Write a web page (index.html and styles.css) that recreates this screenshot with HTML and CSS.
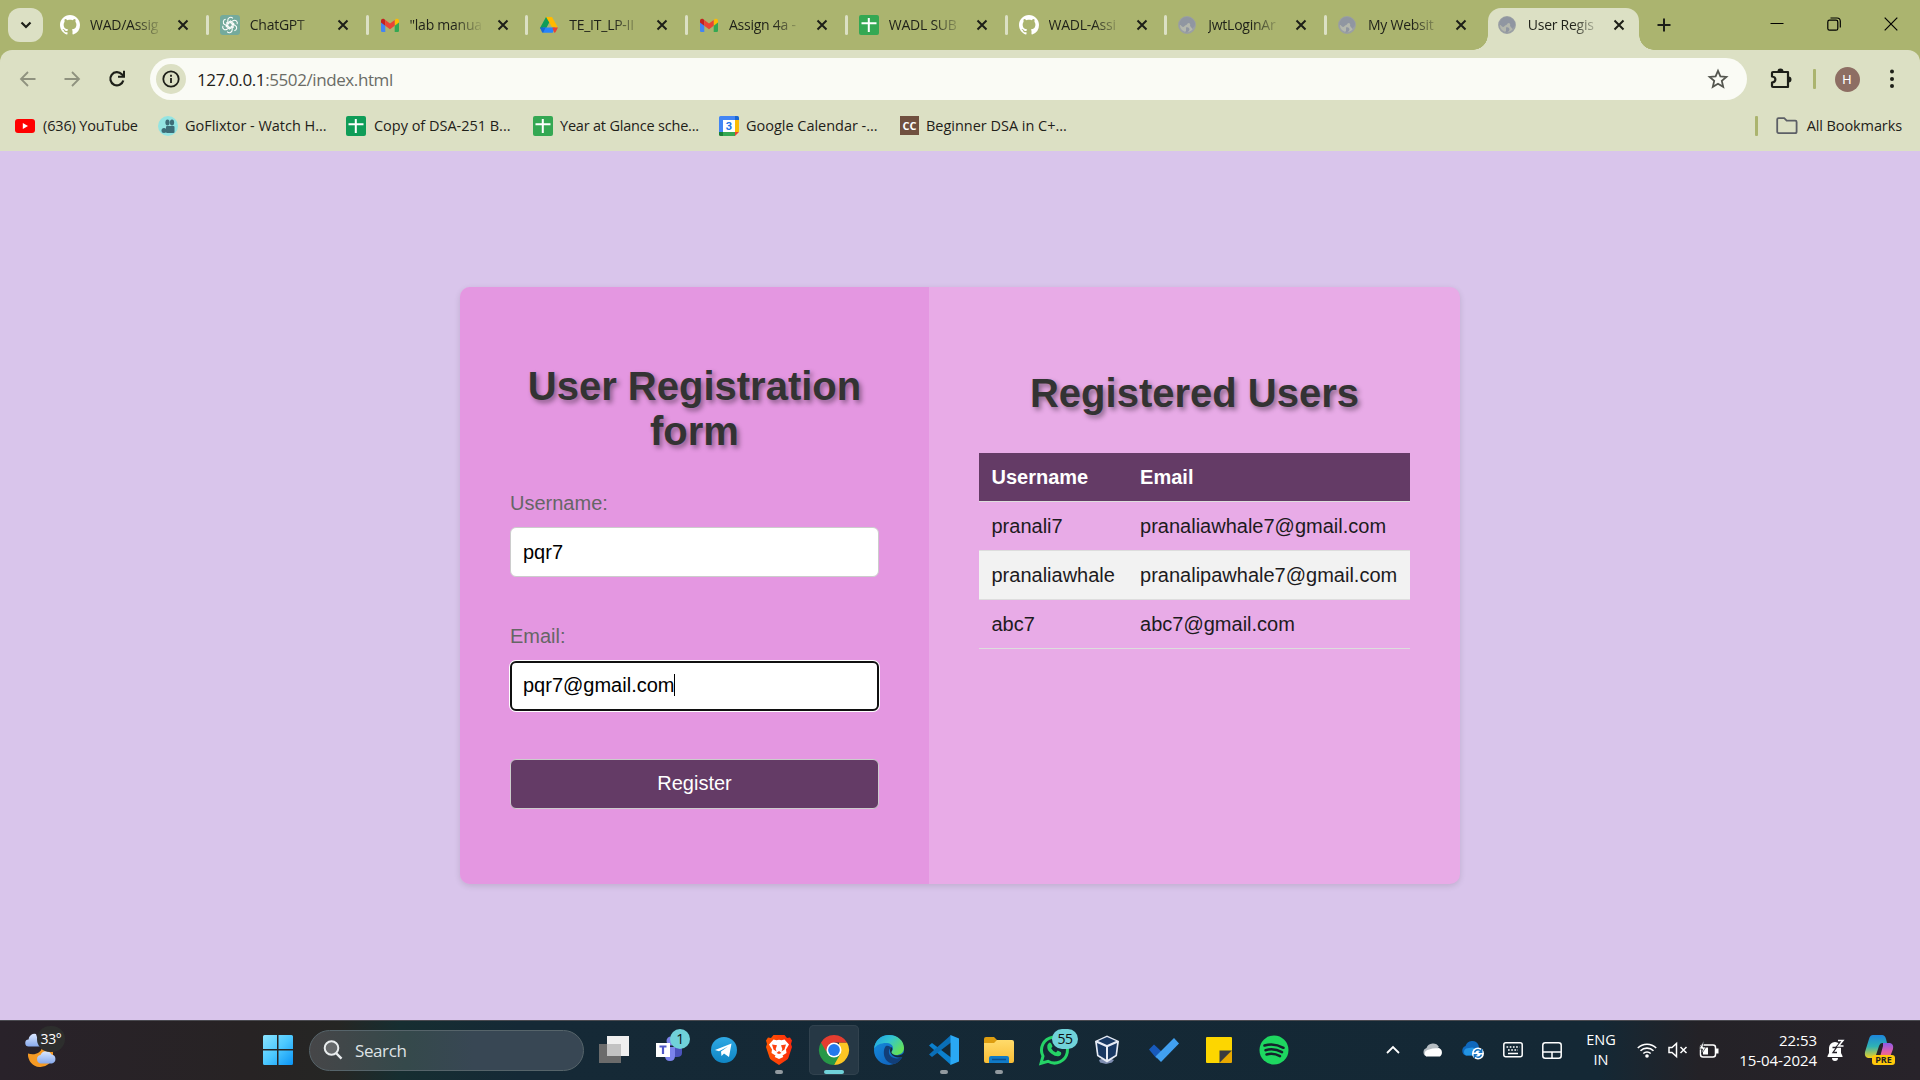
FILE: index.html
```html
<!DOCTYPE html>
<html lang="en">
<head>
<meta charset="utf-8">
<title>User Registration</title>
<link rel="stylesheet" href="styles.css">
</head>
<body>
<svg class="defs" width="0" height="0">
  <defs>
    <linearGradient id="gWin" x1="0" y1="0" x2="1" y2="1"><stop offset="0" stop-color="#8be4ff"/><stop offset=".5" stop-color="#4cc8ff"/><stop offset="1" stop-color="#0a94f5"/></linearGradient>
    <linearGradient id="gTel" x1="0" y1="0" x2="0" y2="1"><stop offset="0" stop-color="#2fa9e4"/><stop offset="1" stop-color="#0f85c4"/></linearGradient>
    <linearGradient id="gBrave"><stop offset="0" stop-color="#ff5601"/><stop offset="1" stop-color="#fb2a0d"/></linearGradient>
    <linearGradient id="gEdgeA" x1="0" y1="0" x2="1" y2=".6"><stop offset="0" stop-color="#1d9de6"/><stop offset=".5" stop-color="#33c5d0"/><stop offset="1" stop-color="#63e15a"/></linearGradient>
    <linearGradient id="gEdgeB" x1="0" y1="0" x2="1" y2="1"><stop offset="0" stop-color="#1590e0"/><stop offset="1" stop-color="#1058b5"/></linearGradient>
    <linearGradient id="gFolder" x1="0" y1="0" x2="0" y2="1"><stop offset="0" stop-color="#ffdb6b"/><stop offset="1" stop-color="#f9bd35"/></linearGradient>
    <linearGradient id="gCloud" x1="0" y1="0" x2="0" y2="1"><stop offset="0" stop-color="#dbe8ff"/><stop offset="1" stop-color="#87a9ec"/></linearGradient>
    <linearGradient id="gCopA" x1="0" y1="0" x2="0" y2="1"><stop offset="0" stop-color="#1d86dc"/><stop offset=".5" stop-color="#2fb2b4"/><stop offset="1" stop-color="#f0d020"/></linearGradient>
    <linearGradient id="gCopB" x1="0" y1="0" x2="0" y2="1"><stop offset="0" stop-color="#8d5be8"/><stop offset=".5" stop-color="#e55fa8"/><stop offset="1" stop-color="#f8834a"/></linearGradient>
    <symbol id="close" viewBox="0 0 12 12"><path d="M1.5 1.5l9 9M10.5 1.5l-9 9" stroke="#1d1f18" stroke-width="2" fill="none"/></symbol>
    <symbol id="github" viewBox="0 0 16 16"><path fill="#fff" d="M8 0C3.58 0 0 3.58 0 8c0 3.54 2.29 6.53 5.47 7.59.4.07.55-.17.55-.38 0-.19-.01-.82-.01-1.49-2.01.37-2.53-.49-2.69-.94-.09-.23-.48-.94-.82-1.13-.28-.15-.68-.52-.01-.53.63-.01 1.08.58 1.23.82.72 1.21 1.87.87 2.33.66.07-.52.28-.87.51-1.07-1.78-.2-3.64-.89-3.64-3.95 0-.87.31-1.59.82-2.15-.08-.2-.36-1.02.08-2.12 0 0 .67-.21 2.2.82.64-.18 1.32-.27 2-.27s1.36.09 2 .27c1.53-1.04 2.2-.82 2.2-.82.44 1.1.16 1.92.08 2.12.51.56.82 1.27.82 2.15 0 3.07-1.87 3.75-3.65 3.95.29.25.54.73.54 1.48 0 1.07-.01 1.93-.01 2.2 0 .21.15.46.55.38A8.01 8.01 0 0 0 16 8c0-4.42-3.58-8-8-8z"/></symbol>
    <path id="petal" d="M7.8 8.6V5.2a2.8 2.8 0 0 1 5-1.8M8 8.7l3-1.8 3.2 1.9"/>
    <symbol id="gpt" viewBox="0 0 20 20"><rect width="20" height="20" rx="3" fill="#74aa9c"/><g fill="none" stroke="#fff" stroke-width="1.05" stroke-linejoin="round"><use href="#petal"/><use href="#petal" transform="rotate(60 10 10)"/><use href="#petal" transform="rotate(120 10 10)"/><use href="#petal" transform="rotate(180 10 10)"/><use href="#petal" transform="rotate(240 10 10)"/><use href="#petal" transform="rotate(300 10 10)"/></g></symbol>
    <symbol id="gmail" viewBox="0 0 20 20"><path fill="#4285f4" d="M1 6l4.3 3.2V17H2.2Q1 17 1 15.8z"/><path fill="#34a853" d="M19 6l-4.3 3.2V17h3.1q1.2 0 1.2-1.2z"/><path fill="#fbbc04" d="M14.7 5l1.2-.9C17.2 3 19 4 19 5.7v1.7l-4.3 3.3z"/><path fill="#c5221f" d="M5.3 5l-1.2-.9C2.8 3 1 4 1 5.7v1.7l4.3 3.3z"/><path fill="#ea4335" d="M5.3 5L10 8.5 14.7 5v5.7L10 14.2l-4.7-3.5z"/></symbol>
    <symbol id="drive" viewBox="0 0 20 20"><path fill="#0f9d58" d="M7 2h2.5l1.5 4-6 11.5L1 13z"/><path fill="#ffba00" d="M7 2h6l6 10.5h-5.7z"/><path fill="#2684fc" d="M4 12.5h12l-2.3 5.3H4z"/><path fill="#ea4335" d="M13.3 12.5H19l-2.4 4.5q-.5.8-1.4.8z"/><path fill="#1967d2" d="M1 12.5h5.7L4 17.8q-.9-.2-1.200-1z"/></symbol>
    <symbol id="sheet" viewBox="0 0 20 20"><rect width="20" height="20" rx="2" fill="currentColor"/><path d="M2.5 8.2h15M9.800 3v14" stroke="#fff" stroke-width="2"/></symbol>
    <symbol id="globe" viewBox="0 0 20 20"><circle cx="9" cy="10" r="8" fill="#b4b7ad" stroke="#9a9fa4" stroke-width="1.8"/><path fill="#9096a1" d="M8.500 2c5 0 8 3 8.500 6.500 0 2-1 4-2.500 5.500-1-2-2-1.500-2.500-3.500.5-1.500 0-2.500-1.500-2.500-1.500.5-1.200 1.800-2.500 2S6.500 12 5 12c-1.500-.5-2-2-3.500-2.200C1.500 5 5 2 8.500 2zM8 12.500c2-1 3.500.500 3.500 2 0 1.500-2 3-4 3.300-.500-1.300 1-2 .500-3.300z"/></symbol>
  </defs>
</svg>

<header class="tabstrip">
  <button class="tabsearch"><svg width="14" height="14" viewBox="0 0 14 14"><path d="M2.5 4.500L7 9l4.500-4.500" fill="none" stroke="#1d1f18" stroke-width="2.200"/></svg></button>
  <div class="tabs">
    <div class="tab first"><svg class="fav"><use href="#github"/></svg><span class="t">WAD/Assig</span><svg class="x"><use href="#close"/></svg></div>
    <div class="tab"><svg class="fav"><use href="#gpt"/></svg><span class="t">ChatGPT</span><svg class="x"><use href="#close"/></svg></div>
    <div class="tab"><svg class="fav"><use href="#gmail"/></svg><span class="t">"lab manua</span><svg class="x"><use href="#close"/></svg></div>
    <div class="tab"><svg class="fav"><use href="#drive"/></svg><span class="t">TE_IT_LP-II</span><svg class="x"><use href="#close"/></svg></div>
    <div class="tab"><svg class="fav"><use href="#gmail"/></svg><span class="t">Assign 4a -</span><svg class="x"><use href="#close"/></svg></div>
    <div class="tab"><svg class="fav sheet-a"><use href="#sheet"/></svg><span class="t">WADL SUB</span><svg class="x"><use href="#close"/></svg></div>
    <div class="tab"><svg class="fav"><use href="#github"/></svg><span class="t">WADL-Assi</span><svg class="x"><use href="#close"/></svg></div>
    <div class="tab"><svg class="fav"><use href="#globe"/></svg><span class="t">JwtLoginAr</span><svg class="x"><use href="#close"/></svg></div>
    <div class="tab"><svg class="fav"><use href="#globe"/></svg><span class="t">My Websit</span><svg class="x"><use href="#close"/></svg></div>
    <div class="tab active"><svg class="fav"><use href="#globe"/></svg><span class="t">User Regis</span><svg class="x"><use href="#close"/></svg></div>
  </div>
  <svg class="plus" width="14" height="14" viewBox="0 0 14 14"><path d="M7 .5v13M.5 7h13" stroke="#1d1f18" stroke-width="2"/></svg>
  <div class="winctl">
    <svg width="14" height="14" viewBox="0 0 14 14"><path d="M.5 6.500h13" stroke="#000" stroke-width="1"/></svg>
    <svg width="14" height="14" viewBox="0 0 14 14"><g fill="none" stroke="#000" stroke-width="1.200"><rect x=".8" y="3.200" width="10" height="10" rx="1.800"/><path d="M3.500 1h6.500q3.300 0 3.300 3.300v6.200"/></g></svg>
    <svg width="14" height="14" viewBox="0 0 14 14"><path d="M.7.700l12.600 12.600M13.300.700L.7 13.300" stroke="#000" stroke-width="1.200"/></svg>
  </div>
</header>

<section class="chrome">
  <div class="toolbar">
    <svg class="nav dim" width="18" height="18" viewBox="0 0 18 18"><path d="M16.500 9H2.500M9 2L2 9l7 7" fill="none" stroke="currentColor" stroke-width="1.800"/></svg>
    <svg class="nav dim" width="18" height="18" viewBox="0 0 18 18"><path d="M1.500 9h14M9 2l7 7-7 7" fill="none" stroke="currentColor" stroke-width="1.800"/></svg>
    <svg class="nav" width="18" height="18" viewBox="0 0 18 18"><path d="M15.300 10.500A6.600 6.600 0 1 1 13.800 4.300L16 6.500" fill="none" stroke="#1d1f18" stroke-width="2.200"/><path d="M17 .8v7h-7v-2h5v-5z" fill="#1d1f18"/></svg>
    <div class="omnibox">
      <span class="info"><svg width="18" height="18" viewBox="0 0 18 18"><circle cx="9" cy="9" r="7.700" fill="none" stroke="#1d1f18" stroke-width="1.800"/><path d="M9 8v5M9 4.800v1.900" stroke="#1d1f18" stroke-width="1.800"/></svg></span>
      <span class="url">127.0.0.1<i>:5502/index.html</i></span>
      <svg class="star" width="20" height="20" viewBox="0 0 20 20"><path d="M10 1.800l2.400 5.600 6 .5-4.600 4 1.400 5.900L10 14.700l-5.200 3.100 1.400-5.900-4.600-4 6-.5z" fill="none" stroke="#555750" stroke-width="1.800"/></svg>
    </div>
    <svg class="puzzle" width="22" height="22" viewBox="0 0 22 22"><path d="M3.500 4h14.500v15H3q-1 0-1-1v-3.500c4.500-.5 4.500-5.500 0-6V5q0-1 1-1z" fill="none" stroke="#1d1f18" stroke-width="2.200" stroke-linejoin="round"/><path d="M7.500 3.500a3 3 0 0 1 6 0zM18.500 8.500a3 3 0 0 1 0 6z" fill="#1d1f18"/></svg>
    <span class="bar b1"></span>
    <span class="avatar">H</span>
    <svg class="dots" width="6" height="20" viewBox="0 0 6 20"><g fill="#1d1f18"><circle cx="3" cy="2.500" r="2"/><circle cx="3" cy="10" r="2"/><circle cx="3" cy="17" r="2"/></g></svg>
  </div>
  <nav class="bookmarks">
    <a class="k1"><svg class="fav" viewBox="0 0 20 20"><rect y="3" width="20" height="14" rx="3" fill="#f00"/><path d="M7.800 7l5.200 3-5.200 3z" fill="#fff"/></svg><span>(636) YouTube</span></a>
    <a class="k2"><svg class="fav" viewBox="0 0 20 20"><circle cx="10" cy="10" r="10" fill="#93e4e2"/><g fill="#3d6d78"><ellipse cx="9.500" cy="6.500" rx="2.100" ry="3"/><ellipse cx="14" cy="6.500" rx="2.100" ry="3"/><rect x="8" y="10" width="8.500" height="7" rx="1"/><circle cx="6" cy="14.500" r="2.500"/></g></svg><span>GoFlixtor - Watch H...</span></a>
    <a class="k3"><svg class="fav sheet-b"><use href="#sheet"/></svg><span>Copy of DSA-251 B...</span></a>
    <a class="k4"><svg class="fav sheet-a"><use href="#sheet"/></svg><span>Year at Glance sche...</span></a>
    <a class="k5"><svg class="fav" viewBox="0 0 20 20"><path fill="#4285f4" d="M1.500 0H16v4H4v12H0V1.500Q0 0 1.500 0z"/><path fill="#1967d2" d="M16 0h2.500Q20 0 20 1.500V4h-4z"/><path fill="#fbbc04" d="M16 4h4v12h-4z"/><path fill="#34a853" d="M4 16h12v4H4z"/><path fill="#188038" d="M0 16h4v4H1.500Q0 20 0 18.500z"/><path fill="#ea4335" d="M16 16h4l-4 4z"/><path fill="#fff" d="M4 4h12v12H4z"/><text x="10" y="14.300" text-anchor="middle" class="cal">3</text></svg><span>Google Calendar -...</span></a>
    <a class="k6"><span class="cc">CC</span><span>Beginner DSA in C+...</span></a>
    <a class="all"><span class="bar"></span><svg width="22" height="18" viewBox="0 0 22 18"><path d="M1.200 14.500v-12Q1.200 1.200 2.500 1.200h5.700l2.500 2.500h8.600q1.300 0 1.300 1.300v9.500q0 1.700-1.500 1.700H2.700q-1.500 0-1.500-1.700z" fill="none" stroke="#5c5f66" stroke-width="1.800"/></svg><span>All Bookmarks</span></a>
  </nav>
</section>

<main class="page">
  <div class="card">
    <form class="register">
      <h1>User Registration form</h1>
      <label>Username:</label>
      <div class="field">pqr7</div>
      <label>Email:</label>
      <div class="field focus">pqr7@gmail.com<span class="caret"></span></div>
      <button type="button" class="submit">Register</button>
    </form>
    <section class="users">
      <h1>Registered Users</h1>
      <table>
        <tr><th>Username</th><th>Email</th></tr>
        <tr><td>pranali7</td><td>pranaliawhale7@gmail.com</td></tr>
        <tr class="alt"><td>pranaliawhale</td><td>pranalipawhale7@gmail.com</td></tr>
        <tr><td>abc7</td><td>abc7@gmail.com</td></tr>
      </table>
    </section>
  </div>
</main>

<footer class="taskbar">
  <div class="weather">
    <svg width="32" height="32" viewBox="0 0 32 32"><path d="M3 13.500a3.500 3.500 0 0 1-.5-7A6 6 0 0 1 10 1l4 12.500z" fill="url(#gCloud)"/><path d="M16 14.500h11v8a12.500 12.500 0 0 1-25-2c6 2 13 0 14-6z" fill="#f59a24"/><path d="M15 30.500a4.300 4.300 0 0 1-.5-8.500 6 6 0 0 1 11-.5 4.600 4.600 0 0 1 .5 9z" fill="url(#gCloud)"/></svg>
    <span class="temp">33°</span>
  </div>
  <svg class="start" width="30" height="30" viewBox="0 0 30 30"><path fill="url(#gWin)" d="M1.500 0H14v14H0V1.500Q0 0 1.500 0zM15.500 0h13Q30 0 30 1.500V14H15.500zM0 15.500h14V30H1.500Q0 30 0 28.500zM15.500 15.500H30v13q0 1.500-1.500 1.500h-13z"/></svg>
  <div class="search"><svg width="20" height="20" viewBox="0 0 20 20"><circle cx="8.500" cy="8" r="6.800" fill="#ffffff30" stroke="#e9edee" stroke-width="2"/><path d="M13 13l5.500 5.700" stroke="#e9edee" stroke-width="2.500"/></svg><span>Search</span></div>
  <div class="apps">
    <div class="app"><svg viewBox="0 0 30 30"><path fill="#6b6b6b" d="M0 9h22v19H0z"/><path fill="#efefef" d="M8 1h22v20H8z"/><path fill="#c2c2c2" d="M8 9h14v12H8z"/></svg></div>
    <div class="app"><svg viewBox="0 0 30 30"><path d="M18 12h10v6q0 4-5 4h-4z" fill="#4b53bc"/><circle cx="17" cy="6" r="4.500" fill="#7b83eb"/><path d="M11 12h10v9q0 5-5 5-5 0-5-5z" fill="#7b83eb"/><rect x="2" y="8" width="14" height="14" fill="#fff"/><path d="M5.500 11.500h7M9 11v8" stroke="#5059c9" stroke-width="2.200"/></svg><span class="badge">1</span></div>
    <div class="app"><svg viewBox="0 0 30 30"><circle cx="15" cy="15" r="13" fill="url(#gTel)"/><path d="M6 15L22.500 8.500 20 22l-5-3.500-2.500 2.500-.5-4.500 7-5-9 4.800z" fill="#fff"/></svg></div>
    <div class="app run"><svg viewBox="0 0 30 30"><path d="M9.500 0h11l2.500 3 3-.5 2 3-1 3.500 1 3-3.500 10.500q-.5 1.500-2 2.500L15 30l-7.500-5q-1.500-1-2-2.500L2 12l1-3-1-3.500 2-3L7 3z" fill="url(#gBrave)"/><path d="M9.500 4.500l3 .8 2.500-.5 2.500.5 3-.8 4.500 5-3 5 .5 3.500-4 2.500.8 1.500L15 24l-4.300-2 .8-1.500-4-2.500.5-3.500L5 9.500z" fill="#fff"/><path d="M8 9.500l5 .7-1.300 3.800.8 2.500-3-2zM22 9.500l-5 .7 1.300 3.800-.8 2.500 3-2zM15 16l2.500 2L15 19l-2.500-1z" fill="#fb4310"/></svg></div>
    <div class="app on"><svg viewBox="0 0 30 30"><path d="M28 7.500A15 15 0 0 1 15 30L20 16V7.500z" fill="#fdc623"/><path d="M2 7.500A15 15 0 0 0 15 30l6.500-11.200L9 12z" fill="#279847"/><path d="M2 7.500a15 15 0 0 1 26 0H15l-7 5.500-.5 4z" fill="#e43d30"/><circle cx="15" cy="15" r="7.500" fill="#fff"/><circle cx="15" cy="15" r="5.900" fill="#2379ec"/></svg></div>
    <div class="app"><svg viewBox="0 0 30 30"><circle cx="15" cy="15" r="15" fill="url(#gEdgeB)"/><path d="M0 14C1 5 7 0 15 0c9 0 15 6 15 13 0 5-4 7-8 7-3 0-5-1-5-2.500 0-1 2-1.500 2-4.500 0-3-3-5-7-5C7 8 2 10 0 14z" fill="url(#gEdgeA)"/><path d="M12 11c-4 4-3 17 8 18 4-1 7-4 8-7-5 3-12 1-13-4-.5-3 1-5 2-5 0-1-3-3-5-2z" fill="#123f79"/><path d="M17 12c2 1 1.500 3.500.3 5 .7 2 3 3.500 6 3.500 3 0 5.500-1 6.700-3v4c-4 2-11 1-13-3-1.500-2-1-4.500 0-6.500z" fill="#142936"/></svg></div>
    <div class="app run"><svg viewBox="0 0 30 30"><path d="M0 10.500L3 8l19 14.500V30z" fill="#0b80ce"/><path d="M0 19.500L3 22 22 7.500V0z" fill="#0a6fb8"/><path d="M21.500 0L30 3.500v23L21.500 30z" fill="#2aa8f4"/></svg></div>
    <div class="app run"><svg viewBox="0 0 30 30"><path d="M0 4q0-2 2-2h8l3 3v6H0z" fill="#dd9d10"/><path d="M0 8h10l3-3h15q2 0 2 2v19q0 2-2 2H2q-2 0-2-2z" fill="url(#gFolder)"/><path d="M5 28v-5q0-2 2-2h16q2 0 2 2v5z" fill="#107bc7"/><path d="M8 24.500h14" stroke="#0b4f8e" stroke-width="1.500"/></svg></div>
    <div class="app"><svg viewBox="0 0 30 30"><path d="M2 28.300l2-7.200A13 13 0 1 1 9 26.300z" fill="none" stroke="#25d366" stroke-width="3"/><path d="M9 9q2-3 3.500 0l1 2.500-1.300 1.800q1.500 3 4.800 4.300l1.700-2 3.300 1.700q1 3-2.500 4-3 .5-7-2.500T8.300 12.500Q8 10 9 9z" fill="#25d366"/></svg><span class="badge wide">55</span></div>
    <div class="app vbox"><svg viewBox="0 0 30 30"><path d="M7 25l7-3 8 3-2 2.500-6 1.500-6-1.500z" fill="#7e8db0"/><path d="M3 6l12-5.500L27 6l-2 15-10 6.500L5 21z" fill="#e6ebf5"/><path d="M6 6l9-4 9 4-9 4zM5 8l9 4v12.500L6.500 20zM25 8l-9 4v12.500l7.500-4.500z" fill="#183862"/></svg></div>
    <div class="app"><svg viewBox="0 0 30 30"><path d="M0 14.500l5-5 8.500 8-6 6z" fill="#185abd"/><path d="M6.500 21.500L25 3l5 5.500L12 27z" fill="#41a0f0"/></svg></div>
    <div class="app"><svg viewBox="0 0 30 30"><path d="M3 2h24q1 0 1 1v13L16 28H3q-1 0-1-1V3q0-1 1-1z" fill="#fdd600"/><path d="M15.500 15.500H28L15.500 28z" fill="#393a40"/><path d="M28 15.500V27q0 1-1 1H15.500z" fill="#e8a800"/></svg></div>
    <div class="app"><svg viewBox="0 0 30 30"><circle cx="15" cy="15" r="14.500" fill="#1ed760"/><path d="M5.500 10.500q9.500-3 19 2.300M6.500 15.200q8.500-2.500 16.500 2M7.500 19.500q7-2 13.500 1.700" fill="none" stroke="#14232c" stroke-width="2.500" stroke-linecap="round"/></svg></div>
  </div>
  <div class="tray">
    <svg width="14" height="10" viewBox="0 0 14 10"><path d="M1 8l6-6 6 6" fill="none" stroke="#fff" stroke-width="1.800"/></svg>
    <svg width="22" height="16" viewBox="0 0 22 16"><path d="M4.500 14.500a4.500 4.500 0 0 1 0-8.500A7 7 0 0 1 17 5z" fill="#b6bdc2"/><path d="M4.500 14.500a3.500 3.500 0 0 1 1-6.500l5-1.500L17 6a5 5 0 0 1 1 8.500z" fill="#fff"/></svg>
    <svg width="24" height="20" viewBox="0 0 24 20"><path d="M5 15.500a5 5 0 0 1-.5-9.500A7 7 0 0 1 17.500 5L19 15z" fill="#0f68bd"/><path d="M5 15.500a4 4 0 0 1 0-7l6-1 9 2-3 6z" fill="#2394e3"/><circle cx="17" cy="13.500" r="6" fill="#fff"/><path d="M13.500 12.500a3.700 3.700 0 0 1 7-.5M20.500 14.500a3.700 3.700 0 0 1-7 .5M20.700 9v3.200h-3M13.300 18v-3.200h3" stroke="#1673c3" stroke-width="1.400" fill="none"/></svg>
    <svg width="20" height="16" viewBox="0 0 20 16"><rect x=".8" y=".8" width="18.400" height="14" rx="2" fill="none" stroke="#fff" stroke-width="1.500"/><path d="M3.500 5h13M5 8h10" stroke="#fff" stroke-width="1.700" stroke-dasharray="1.700 1.500"/><path d="M5 11.500h10" stroke="#fff" stroke-width="1.500"/></svg>
    <svg width="20" height="17" viewBox="0 0 20 17"><rect x=".8" y=".8" width="18.400" height="15.400" rx="2.500" fill="none" stroke="#fff" stroke-width="1.500"/><path d="M1 10h18M10 10v6" stroke="#fff" stroke-width="1.500"/></svg>
    <span class="lang">ENG<br>IN</span>
    <svg width="20" height="16" viewBox="0 0 20 16"><g fill="none" stroke="#fff" stroke-width="1.600"><path d="M.8 6a13 13 0 0 1 18.400 0M3.500 8.800a9.200 9.200 0 0 1 13 0M6.300 11.500a5.300 5.300 0 0 1 7.400 0"/></g><circle cx="10" cy="14" r="1.800" fill="#fff"/></svg>
    <svg width="20" height="16" viewBox="0 0 20 16"><path d="M1 5.500h3L8.500 1.500v13L4 10.500H1zM12.500 5l6 6M18.500 5l-6 6" fill="none" stroke="#fff" stroke-width="1.500"/></svg>
    <svg width="20" height="18" viewBox="0 0 20 18"><rect x="1.500" y="4" width="15" height="12" rx="2.500" fill="none" stroke="#fff" stroke-width="1.500"/><path d="M17 7.500h2.500v5H17zM4 6.500h5v7H4z" fill="#fff"/><path d="M5-.5L0 8h3.500L2.500 13 7 6H4z" fill="#fff" stroke="#202228" stroke-width=".7"/></svg>
    <span class="clock">22:53<br>15-04-2024</span>
    <svg width="18" height="22" viewBox="0 0 18 22"><path d="M8 3a6 6 0 0 0-6 6v5L.5 17v1H15.500v-1L14 14V9a6 6 0 0 0-6-6zM5 19h6a3 3 0 0 1-6 0z" fill="#fff"/><path d="M5.500 8.500h4L6 13.500h4" fill="none" stroke="#25222a" stroke-width="1.300"/><path d="M11 1.500h5l-4.500 5.500h5" fill="none" stroke="#25222a" stroke-width="3.500"/><path d="M11 1.500h5l-4.500 5.500h5" fill="none" stroke="#fff" stroke-width="1.500"/></svg>
    <div class="copilot"><svg width="30" height="30" viewBox="0 0 30 30"><path d="M8 0h9q3 0 4 4l1 4h-5q-2 0-3 3l-3 9q-1 3-4 3H3q-4-1-3-6L4 4q1-4 4-4z" fill="url(#gCopA)"/><path d="M18 8h7q4 1 3 6l-3 8q-2 4-5 4h-9q3-1 4-4l3-11q0-2 0-3z" fill="url(#gCopB)"/></svg><span class="pre">PRE</span></div>
  </div>
</footer>
</body>
</html>
```
FILE: styles.css
```css
* { box-sizing: border-box; }
body {
  margin: 0;
  width: 1920px;
  height: 1080px;
  overflow: hidden;
  display: flex;
  flex-direction: column;
  background: #d9c5eb;
  font-family: "Open Sans", "Noto Sans", sans-serif;
  color: #1f2119;
}
svg { display: block; flex: none; overflow: visible; }
.defs { position: absolute; }
button { border: 0; padding: 0; }

/* Tab strip */
.tabstrip { height: 50px; background: #abb46f; display: flex; align-items: center; padding-left: 8px; flex: none; box-shadow: 0 12px 0 #abb46f; position: relative; }
.tabsearch { width: 35px; height: 34px; border-radius: 12px; background: #dce0c4; display: grid; place-items: center; margin-right: 4px; }
.tabs { display: flex; height: 50px; }
.tab { width: 159.75px; display: flex; align-items: center; padding-left: 13px; position: relative; }
.tab::before { content: ""; position: absolute; left: -1px; top: 15px; width: 3px; height: 20px; border-radius: 2px; background: #dce0c4; }
.tab.first::before { display: none; }
.fav { width: 20px; height: 20px; }
.sheet-a { color: #34a853; }
.sheet-b { color: #0f9d58; }
.t {
  width: 74px; margin-left: 10px; font-size: 14px; letter-spacing: -.25px; line-height: 22px; white-space: nowrap;
  -webkit-mask-image: linear-gradient(90deg, #000 60%, transparent 100%);
  mask-image: linear-gradient(90deg, #000 60%, transparent 100%);
}
.x { width: 12px; height: 12px; margin-left: 13px; }
.tab.active { width: 151px; height: 42px; margin: 8px 0 0 3px; padding: 0 0 8px 10px; background: #dce0c4; border-radius: 13px 13px 0 0; }
.tab.active .x { margin-left: 11px; }
.tab.active::before, .tab.active::after {
  content: ""; position: absolute; left: -15px; top: auto; bottom: 0; width: 15px; height: 15px; border-radius: 0;
  background: radial-gradient(circle at 0 0, transparent 14.5px, #dce0c4 15px);
}
.tab.active::after { left: auto; right: -15px; background: radial-gradient(circle at 100% 0, transparent 14.5px, #dce0c4 15px); }
.plus { margin-left: 18px; }
.winctl { margin-left: auto; display: flex; gap: 43px; padding: 0 22px 2px 0; }

/* Toolbar and bookmarks */
.chrome { height: 101px; flex: none; background: #dce0c4; border-radius: 12px 12px 0 0; padding-top: 8px; position: relative; }
.toolbar { height: 42px; display: flex; align-items: center; padding-left: 18.5px; }
.nav { margin-right: 26.5px; }
.dim { color: #8f927f; }
.omnibox { width: 1597px; height: 42px; border-radius: 21px; background: #fafbf5; display: flex; align-items: center; padding: 0 19px 0 6px; margin-left: -2px; }
.info { width: 30px; height: 30px; border-radius: 50%; background: #dce0c4; display: grid; place-items: center; }
.url { font-size: 17px; letter-spacing: -.4px; margin-left: 11px; }
.url i { font-style: normal; color: #6a6c66; }
.star { margin-left: auto; }
.puzzle { margin-left: 23px; }
.bar { width: 2.5px; height: 20px; border-radius: 1px; background: #abb46f; }
.b1 { margin-left: 21px; }
.avatar { width: 25px; height: 25px; border-radius: 50%; background: #8d6e63; color: #fff; font: 13px Roboto, sans-serif; display: grid; place-items: center; margin-left: 19px; }
.dots { margin-left: 29px; }
.bookmarks { height: 51px; display: flex; align-items: center; padding-left: 15px; font-size: 14.5px; letter-spacing: -.02px; }
.bookmarks a { display: flex; align-items: center; gap: 8px; white-space: nowrap; }
.bookmarks .k2, .bookmarks .k4, .bookmarks .k5 { gap: 7px; }
.k1 { width: 143px; letter-spacing: -.15px; }
.k2 { width: 188px; }
.k3 { width: 187px; }
.k4 { width: 186px; letter-spacing: -.2px; }
.k5 { width: 181px; }
.bookmarks .k6 { gap: 7px; }
.cal { font: bold 11px Roboto, sans-serif; fill: #1a73e8; }
.cc { width: 19px; height: 19px; background: #70503f; color: #fff; font: bold 11px/19px "Open Sans", sans-serif; text-align: center; }
.bookmarks .all { margin-left: auto; padding-right: 18px; gap: 9px; letter-spacing: -.1px; }
.all .bar { margin-right: 9px; }

/* Page */
.page { flex: 1; display: flex; justify-content: center; align-items: center; font-family: "Liberation Sans", Arial, sans-serif; font-size: 20px; color: #1d1b1d; }
.card { width: 1000px; height: 597px; display: flex; background: #e8abe7; border-radius: 10px; overflow: hidden; box-shadow: 0 2px 6px rgba(0, 0, 0, .12); }
.register { width: 469px; background: #e497e1; padding: 77px 50px 0; }
.users { padding: 84px 50px 0; }
h1 { margin: 0; font-size: 40px; line-height: 45px; text-align: center; color: #333; text-shadow: 2.5px 2.5px 5px rgba(0, 0, 0, .4); }
.register h1 { margin-bottom: 37px; }
label { display: block; height: 36px; line-height: 24px; color: #666; }
.field { height: 50px; padding-left: 12px; background: #fff; border: 1px solid #ccc; border-radius: 6px; margin-bottom: 48px; color: #000; display: flex; align-items: center; }
.field + label { line-height: 22px; }
.focus { border: 2px solid #101010; padding: 0 0 2px 11px; box-shadow: 0 0 0 1px #fff; }
.caret { width: 1px; height: 22px; background: #000; }
.submit { display: block; width: 100%; height: 50px; padding-bottom: 2px; border: 1px solid #ccc; border-radius: 6px; background: #643b66; color: #fff; font: inherit; }
.users h1 { margin-bottom: 37px; }
table { border-collapse: separate; border-spacing: 0; width: 431px; }
th, td { height: 49px; padding: 0 12.5px; text-align: left; border-bottom: 1px solid #ddd; }
th { background: #643b66; color: #fff; background-clip: padding-box; }
.alt { background: #f2f2f2; }

/* Taskbar */
.taskbar {
  height: 60px; flex: none; display: flex; align-items: center; color: #fff; border-top: 1px solid #4a4a50; padding-bottom: 1px;
  background: linear-gradient(90deg, #29222a 0, #272324 250px, #252624 340px, #162e31 400px, #152936 520px, #142835 1600px, #242227 1700px, #28232a 100%);
}
.weather { width: 263px; height: 58px; padding: 12px 0 0 26px; position: relative; }
.temp { position: absolute; left: 37px; top: 5px; width: 28px; height: 26px; border-radius: 13px; background: #2d2e2d; font-size: 14px; line-height: 26px; text-align: center; letter-spacing: -.3px; }
.search { width: 275px; height: 41px; margin-left: 16px; border-radius: 21px; border: 1px solid #56646a; background: linear-gradient(90deg, #464648, #35494b 35%, #384754 60%); display: flex; align-items: center; gap: 12px; padding-left: 13px; font-size: 17px; letter-spacing: -.4px; color: #dfe3e5; }
.apps { display: flex; margin-left: 5px; gap: 5px; }
.app { width: 50px; height: 50px; border-radius: 5px; display: grid; place-items: center; position: relative; }
.app svg { width: 30px; height: 30px; }
.vbox { padding-right: 4px; }
.on { background: #263845; box-shadow: inset 0 0 0 1px #31424e; }
.run::after, .on::after { content: ""; position: absolute; bottom: 1px; left: 21px; width: 8px; height: 4px; border-radius: 2px; background: #929aa0; }
.on::after { left: 15px; width: 20px; background: #70d2d9; }
.badge { position: absolute; left: 26px; top: 4px; width: 20px; height: 20px; border-radius: 10px; background: #70d2d9; color: #111; font-size: 14px; line-height: 20px; text-align: center; letter-spacing: -.4px; }
.badge.wide { left: 23px; width: 26px; }
.tray { margin-left: auto; display: grid; align-items: center; justify-items: center; grid-template-columns: 40px 40px 40px 40px 38px 60px 32px 30px 31px 93px 38px 50px; margin-right: 15px; }
.lang, .clock { font-size: 14.5px; line-height: 20px; text-align: center; }
.clock { text-align: right; justify-self: end; font-size: 15px; letter-spacing: -.05px; white-space: nowrap; }
.copilot { width: 30px; height: 30px; position: relative; }
.pre { position: absolute; left: 7px; top: 20px; width: 23px; height: 10px; border-radius: 3px; background: #ffc80a; color: #222; font: bold 9px/10px "Open Sans", sans-serif; text-align: center; }
```
